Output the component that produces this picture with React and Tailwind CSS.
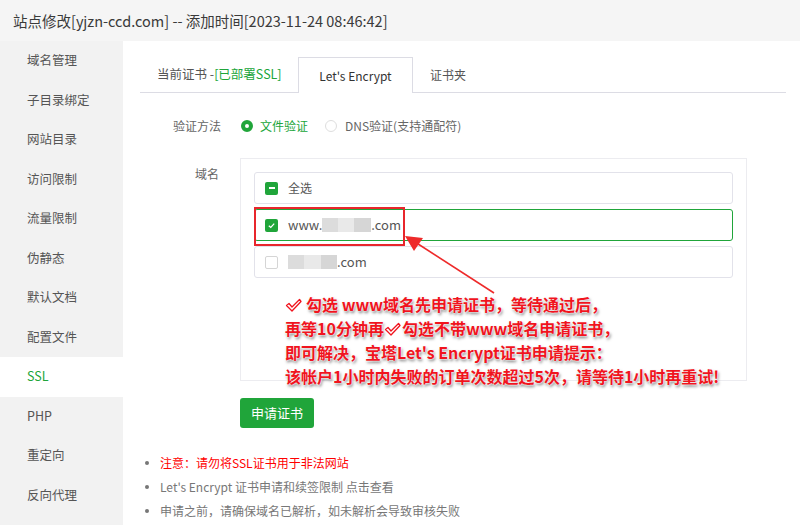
import React from "react";

const navItems = [
  "域名管理",
  "子目录绑定",
  "网站目录",
  "访问限制",
  "流量限制",
  "伪静态",
  "默认文档",
  "配置文件",
  "SSL",
  "PHP",
  "重定向",
  "反向代理",
];

function Mosaic({ widths }) {
  const shades = ["bg-[#dcdcdc]", "bg-[#e9e9e9]", "bg-[#d6d6d6]", "bg-[#e4e4e4]"];
  return (
    <span className="inline-flex h-[14px]">
      {widths.map((w, i) => (
        <span key={i} className={`h-full ${shades[i % 4]}`} style={{ width: w }} />
      ))}
    </span>
  );
}

function CheckBox({ state }) {
  if (state === "off") {
    return <span className="w-[13px] h-[13px] rounded-[2px] border border-[#d5d5d5] bg-white" />;
  }
  return (
    <span className="w-[13px] h-[13px] rounded-[2px] bg-[#20a53a] flex items-center justify-center">
      {state === "half" ? (
        <span className="w-[6px] h-[2px] bg-white" />
      ) : (
        <svg width="9" height="9" viewBox="0 0 10 10">
          <path d="M2 5.2 L4.2 7.2 L8 3" fill="none" stroke="#fff" strokeWidth="1.4" />
        </svg>
      )}
    </span>
  );
}

function TickOutline({ gap }) {
  return (
    <svg
      width="17"
      height="15"
      viewBox="0 0 17 15"
      className={`inline-block -mt-[3px] ${gap ? "mr-[4px]" : "mr-[1px]"}`}
    >
      <path
        d="M1.5 7.5 L4 5.5 L7 9 L14.5 1.5 L16 3.5 L7 13 Z"
        fill="none"
        stroke="#f0141e"
        strokeWidth="1.3"
        strokeLinejoin="round"
      />
    </svg>
  );
}

export default function App() {
  return (
    <div className="relative w-[800px] h-[525px] overflow-hidden bg-white font-['Noto_Sans_CJK_SC','Noto_Sans',sans-serif] text-[12px] text-[#555]">
      {/* Title bar */}
      <div className="h-[41px] bg-[#f5f5f5] flex items-center pl-[13px] text-[14.5px] text-[#3a3a3a]">
        站点修改[yjzn-ccd.com] -- 添加时间[2023-11-24 08:46:42]
      </div>

      <div className="flex h-[484px]">
        {/* Sidebar */}
        <div className="w-[123px] bg-[#f2f2f2] shrink-0">
          {navItems.map((name) => (
            <div
              key={name}
              className={`h-[39.5px] flex items-center pl-[27px] text-[12.5px] ${
                name === "SSL" ? "bg-white text-[#20a53a]" : "text-[#555]"
              }`}
            >
              {name}
            </div>
          ))}
        </div>

        {/* Main */}
        <div className="flex-1 pl-[17px] pr-[14px] pt-[17px]">
          {/* Tabs */}
          <div className="flex items-end h-[35px] border-b border-[#dcdce4]">
            <div className="w-[158px] h-[35px] flex items-center pl-[17px] text-[#555] text-[12.5px]">
              当前证书 -<span className="text-[#20a53a]">[已部署SSL]</span>
            </div>
            <div className="w-[115px] h-[36px] -mb-px flex items-center justify-center bg-white border border-b-0 border-[#dcdce4] text-[#333]">
              Let's Encrypt
            </div>
            <div className="h-[35px] flex items-center pl-[17px] text-[#555]">证书夹</div>
          </div>

          {/* Verify method */}
          <div className="flex items-center h-[24px] mt-[21px]">
            <div className="w-[81px] text-right text-[#666]">验证方法</div>
            <div className="flex items-center ml-[20px]">
              <span className="w-[12px] h-[12px] rounded-full border-[4px] border-[#20a53a] bg-white" />
              <span className="ml-[7px] text-[#20a53a]">文件验证</span>
              <span className="ml-[17px] w-[12px] h-[12px] rounded-full border border-[#dedede] bg-white" />
              <span className="ml-[8px] text-[#666]">DNS验证(支持通配符)</span>
            </div>
          </div>

          {/* Domains */}
          <div className="flex mt-[20px]">
            <div className="w-[79px] text-right text-[#666] pt-[7px]">域名</div>
            <div className="ml-[21px] w-[507px] h-[223px] border border-[#ececf0] px-[13px] pt-[13px]">
              <div className="flex flex-col gap-[5px]">
                <div className="h-[32px] border border-[#e2e2ea] rounded-[3px] flex items-center pl-[10px]">
                  <CheckBox state="half" />
                  <span className="ml-[10px] text-[#555]">全选</span>
                </div>
                <div className="h-[32px] border border-[#20a53a] rounded-[3px] flex items-center pl-[10px]">
                  <CheckBox state="on" />
                  <span className="ml-[10px] text-[#555] flex items-center text-[13px]">
                    www.
                    <Mosaic widths={[16, 16, 17]} />
                    .com
                  </span>
                </div>
                <div className="h-[32px] border border-[#e2e2ea] rounded-[3px] flex items-center pl-[10px]">
                  <CheckBox state="off" />
                  <span className="ml-[10px] text-[#555] flex items-center text-[13px]">
                    <Mosaic widths={[16, 17, 16]} />
                    .com
                  </span>
                </div>
              </div>
            </div>
          </div>

          <button className="ml-[100px] mt-[17px] w-[74px] h-[30px] rounded-[3px] bg-[#20a53a] text-white text-[13px]">
            申请证书
          </button>

          <ul className="mt-[23px] pl-[5px]">
            <li className="h-[24px] flex items-center">
              <span className="w-[4px] h-[4px] rounded-full bg-[#777] mr-[11px]" />
              <span className="text-[#ff0000]">注意：请勿将SSL证书用于非法网站</span>
            </li>
            <li className="h-[24px] flex items-center">
              <span className="w-[4px] h-[4px] rounded-full bg-[#777] mr-[11px]" />
              <span className="text-[#777]">Let's Encrypt 证书申请和续签限制 点击查看</span>
            </li>
            <li className="h-[24px] flex items-center">
              <span className="w-[4px] h-[4px] rounded-full bg-[#777] mr-[11px]" />
              <span className="text-[#777]">申请之前，请确保域名已解析，如未解析会导致审核失败</span>
            </li>
          </ul>
        </div>
      </div>

      {/* Annotation overlay */}
      <div className="absolute left-[254px] top-[207px] w-[151px] h-[39px] border-2 border-[#e8262c]" />
      <svg className="absolute left-0 top-0 pointer-events-none" width="800" height="525">
        <line x1="494" y1="293" x2="415" y2="242" stroke="#ee2a2a" strokeWidth="1.6" />
        <polygon points="405,236 423,238 414,251" fill="#ee2a2a" />
      </svg>
      <div className="absolute left-[285px] top-[292px] text-[16px] leading-[24px] font-bold text-[#f0141e] [text-shadow:0_0_2px_#fff,0_0_2px_#fff,1px_2px_3px_#777]">
        <div>
          <TickOutline gap />
          勾选 www域名先申请证书，等待通过后，
        </div>
        <div>
          再等10分钟再
          <TickOutline />
          勾选不带www域名申请证书，
        </div>
        <div>即可解决，宝塔Let's Encrypt证书申请提示：</div>
        <div>该帐户1小时内失败的订单次数超过5次，请等待1小时再重试!</div>
      </div>
    </div>
  );
}
